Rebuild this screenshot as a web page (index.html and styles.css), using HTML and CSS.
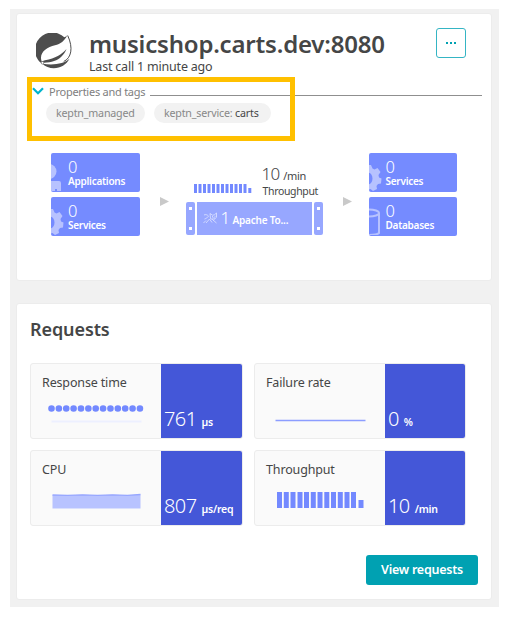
FILE: index.html
```
<!DOCTYPE html>
<html lang="en">
<head>
<meta charset="utf-8">
<title>musicshop.carts.dev:8080</title>
<link rel="stylesheet" href="styles.css">
</head>
<body>
<svg class="defs" width="0" height="0" aria-hidden="true">
  <symbol id="gear" viewBox="0 0 14 38">
    <path fill-rule="evenodd" d="M-4 12h6l1.500 3.500 2 1L8.500 15l3 4-2 3 .5 2.500 2.500 1-.5 5-3 .5-1.500 2 .5 3-4 2-2.500-2L-4 38zM-3 19.500v12h2a4.500 6 0 0 0 0-12z"/>
  </symbol>
</svg>
<main class="board">
  <section class="card service">
    <header class="head">
      <svg class="logo" viewBox="0 0 36 36">
        <path fill="#4d4d4d" d="M31.300 2.200C28.500 8 24.500 10.800 19 12.200 11.500 14 5.200 18 5 24.500c0 1.700.3 3.300 1.100 4.700l-1.800.3A17.400 17.400 0 0 1 28.300 4.300c1.300-.6 2.200-1.200 3-2.100z"/>
        <path fill="#4d4d4d" d="M8 29.800c7.500-.3 13.500-2.300 17.500-6.300 2.300-2.300 4-4.800 5-7.500-4.800 5.500-11 9.300-21.500 11.200l-3.500 1.300zM6.500 30.700c2.800 2.900 6.900 4.500 11.300 4.500 6.700 0 12.700-3.700 15.700-9.500-5.500 5-15.500 6.800-27 5z"/>
        <path fill="none" stroke="#4d4d4d" stroke-width="1" d="M31.700 2.500c5.800 12.500 3.600 22.500-4 26"/>
        <circle cx="6.500" cy="29.800" r="1.300" fill="#fff" stroke="#4d4d4d" stroke-width=".6"/>
      </svg>
      <div class="heading">
        <h1>musicshop.carts.dev:8080</h1>
        <p>Last call 1 minute ago</p>
      </div>
      <button class="more" aria-label="More"><i></i><i></i><i></i></button>
    </header>
    <div class="props">
      <svg class="chevron" viewBox="0 0 12 8"><path d="M1 1.200l5 5 5-5" fill="none" stroke="#00b4cc" stroke-width="2.200"/></svg>
      <span class="props-label">Properties and tags</span>
      <span class="rule"></span>
    </div>
    <div class="chips">
      <span class="chip first">keptn_managed</span>
      <span class="chip second">keptn_service: <b>carts</b></span>
    </div>
    <div class="highlight"></div>
    <div class="flow">
      <div class="stack">
        <div class="tile">
          <svg class="tile-icon" viewBox="0 0 14 38"><circle cx="-2" cy="18.500" r="7.500"/><path d="M0 28h8q2 0 2 2v8H6v-2H4v2H0z"/></svg>
          <span class="num">0</span><span class="cap">Applications</span>
        </div>
        <div class="tile">
          <svg class="tile-icon" viewBox="0 0 14 38"><use href="#gear" width="14" height="38"/></svg>
          <span class="num">0</span><span class="cap">Services</span>
        </div>
      </div>
      <svg class="arrow" viewBox="0 0 9 9"><path d="M0 0l9 4.500-9 4.500z"/></svg>
      <div class="center">
        <div class="rate">
          <svg class="minibars" viewBox="0 0 58 10">
            <path stroke="#7389ff" stroke-width="3" d="M1.500 1v9M6 1v9M10.500 1v9M15 1v9M19.500 1v9M24 1v9M28.500 1v9M33 1v9M37.500 1v9M42 1v9M46.500 1v9M51 1v9M55.800 5v5"/>
          </svg>
          <div class="rate-text">
            <span class="rate-value">10 <small>/min</small></span>
            <span class="rate-name">Throughput</span>
          </div>
        </div>
        <div class="server">
          <div class="ear"><i></i><i></i></div>
          <div class="server-body">
            <svg class="tomcat" viewBox="0 0 14 12" fill="none" stroke="#dfe4ff" stroke-width=".8"><path d="M.5 11l2.500-2.500M1 3C2.500 2.300 4 2.500 5.500 4M1.500 7c2-.5 3-2 4-2.500M3 11l3.500-4L9 10.500M7 1.500l2.500 1.700 2-.3 2-2.100v4.500L10.500 8 7.500 6.500zM9 4.500h1M11.500 4.300h1M9 6h3M10 8l3.500 3"/></svg>
            <span class="count">1</span><span class="tech">Apache To...</span>
          </div>
          <div class="ear"><i></i><i></i></div>
        </div>
      </div>
      <svg class="arrow" viewBox="0 0 9 9"><path d="M0 0l9 4.500-9 4.500z"/></svg>
      <div class="stack">
        <div class="tile">
          <svg class="tile-icon" viewBox="0 0 14 38"><use href="#gear" width="14" height="38"/></svg>
          <span class="num">0</span><span class="cap">Services</span>
        </div>
        <div class="tile">
          <svg class="tile-icon line" viewBox="0 0 14 38"><ellipse cx="0" cy="16" rx="10" ry="3.500"/><path d="M10 16v20q-2 2-10 2"/></svg>
          <span class="num">0</span><span class="cap">Databases</span>
        </div>
      </div>
    </div>
  </section>

  <section class="card requests">
    <h2>Requests</h2>
    <div class="metrics">
      <article class="metric">
        <div class="metric-info">
          <h3>Response time</h3>
          <svg class="chart" viewBox="0 0 130 40">
            <path d="M20.500 12.500h88.600" fill="none" stroke="#7389ff" stroke-width="6.600" stroke-linecap="round" stroke-dasharray="0 7.370"/>
            <path d="M20.500 25.500h90" stroke="#edf0ff" stroke-width="2"/>
          </svg>
        </div>
        <div class="metric-value"><strong>761</strong><span>µs</span></div>
      </article>
      <article class="metric">
        <div class="metric-info">
          <h3>Failure rate</h3>
          <svg class="chart" viewBox="0 0 130 40"><path d="M20.500 24.500h90" stroke="#8c9dff" stroke-width="1.500"/></svg>
        </div>
        <div class="metric-value"><strong>0</strong><span>%</span></div>
      </article>
      <article class="metric">
        <div class="metric-info">
          <h3>CPU</h3>
          <svg class="chart" viewBox="0 0 130 40">
            <path d="M21.500 12l15 .3 15-.5 15 .5 15-.5 15 .5 13-.8v14H21.500z" fill="#b8c3ff"/>
            <path d="M21.500 12l15 .3 15-.5 15 .5 15-.5 15 .5 13-.8" fill="none" stroke="#97a7ff" stroke-width="1.300"/>
          </svg>
        </div>
        <div class="metric-value"><strong>807</strong><span>µs/req</span></div>
      </article>
      <article class="metric">
        <div class="metric-info">
          <h3>Throughput</h3>
          <svg class="chart" viewBox="0 0 130 40">
            <path stroke="#7389ff" stroke-width="5" d="M24.500 9v16M31.300 9v16M38 9v16M45 9v16M51.500 9v16M58.300 9v16M65 9v16M71.800 9v16M78.500 9v16M85.300 9v16M92 9v16M98.500 9v16M106 17V25"/>
          </svg>
        </div>
        <div class="metric-value"><strong>10</strong><span>/min</span></div>
      </article>
    </div>
    <button class="view">View requests</button>
  </section>
</main>
</body>
</html>
```
FILE: styles.css
```
* { box-sizing: border-box; }
body {
  margin: 0;
  padding: 9px 11px 0 10px;
  background: #fff;
  color: #454646;
  font-family: "Noto Sans", "Open Sans", sans-serif;
}
h1, h2, h3, p { margin: 0; }
button { font-family: inherit; padding: 0; }
svg { display: block; flex: none; }
span { white-space: nowrap; }
.defs { position: absolute; }

.board {
  height: 598px;
  padding: 4px 7px 0 6px;
  background: #f1f1f1;
}
.card {
  position: relative;
  background: #fff;
  border: 1px solid #ececec;
  border-radius: 3px;
}
.service { height: 268px; padding: 14px 9px 0 15px; }
.requests { height: 297px; margin-top: 22px; padding: 13px 13px 0 13px; }

.head { display: flex; height: 55px; }
.logo { width: 36px; height: 36px; margin: 5px 0 0 4px; }
.heading { flex: 1; padding-left: 17px; white-space: nowrap; }
.heading h1 { font-size: 24px; line-height: 31px; font-weight: 600; letter-spacing: -0.2px; }
.heading p { font-size: 12.500px; line-height: 16px; letter-spacing: -0.200px; }
.more {
  width: 30px;
  height: 30px;
  margin-right: 16px;
  border: 1px solid #35b5c4;
  border-radius: 3px;
  background: #fff;
  display: flex;
  align-items: center;
  justify-content: center;
  gap: 2px;
}
.more i { width: 2px; height: 2px; background: #00a1b2; }

.props { display: flex; align-items: center; height: 16px; }
.chevron { width: 12px; height: 8px; }
.props-label { width: 106px; padding-left: 5px; font-size: 11px; letter-spacing: -0.250px; color: #808080; }
.rule { flex: 1; height: 1px; margin-top: 9px; background: #8f8f8f; }

.chips { display: flex; gap: 9px; margin: 4px 0 0 14px; }
.chip {
  height: 20px;
  line-height: 20px;
  padding: 0 10px;
  border-radius: 10px;
  background: #f2f2f2;
  color: #888;
  font-size: 10.700px;
  letter-spacing: -0.200px;
}
.chip b { font-weight: 400; color: #454646; }
.chip.first { width: 99px; }
.chip.second { width: 117px; }
.highlight {
  position: absolute;
  left: 10px;
  top: 63px;
  width: 268px;
  height: 64px;
  border: 5px solid #ffc000;
}

.flow { display: flex; margin: 30px 0 0 19px; }
.stack { display: flex; flex-direction: column; gap: 5.500px; width: 88.500px; }
.tile {
  position: relative;
  height: 38.500px;
  padding: 6px 0 0 17px;
  border-radius: 2px;
  background: #758bff;
  color: #fff;
  overflow: hidden;
}
.tile-icon { position: absolute; left: 0; top: 0; width: 14px; height: 38px; fill: #b7c2ff; }
.tile-icon.line { fill: none; stroke: #b7c2ff; stroke-width: 2; }
.num { display: block; font-size: 16.500px; line-height: 16px; font-weight: 300; }
.cap { display: block; font-size: 10px; line-height: 12px; font-weight: 600; letter-spacing: -0.250px; }
.arrow { width: 9px; height: 9px; margin: 44px 0 0 20px; fill: #c9c9c9; }
.center { width: 137px; margin-left: 17px; padding-top: 14px; }
.arrow + .stack { margin-left: 17px; }
.rate { display: flex; height: 35px; padding-left: 8px; }
.minibars { width: 58px; height: 10px; margin-top: 16px; }
.rate-text { padding-left: 10px; margin-top: -2px; }
.rate-value, .rate-name { display: block; }
.rate-value { font-size: 17px; line-height: 17px; font-weight: 300; letter-spacing: -0.700px; }
.rate-value small { font-size: 11px; font-weight: 400; letter-spacing: -0.300px; }
.rate-name { padding-left: 1px; font-size: 10.500px; line-height: 15px; letter-spacing: -0.350px; }
.server { display: flex; gap: 2px; height: 33px; }
.ear {
  width: 9px;
  padding: 5px 0;
  border-radius: 2px;
  background: #97a7ff;
  display: flex;
  flex-direction: column;
  align-items: center;
  justify-content: space-between;
}
.ear i { width: 3px; height: 3px; background: #fff; }
.server-body { flex: 1; display: flex; align-items: baseline; padding: 5px 0 0 6px; background: #97a7ff; color: #fff; }
.tomcat { width: 14px; height: 12px; }
.count { flex: none; width: 16px; padding-left: 4px; font-size: 17px; line-height: 22px; font-weight: 300; }
.tech { font-size: 10px; font-weight: 600; letter-spacing: -0.200px; }

.requests h2 { font-size: 18px; line-height: 24px; font-weight: 600; letter-spacing: -0.100px; }
.metrics {
  display: grid;
  grid-template-columns: 213px 212px;
  grid-auto-rows: 75.500px;
  gap: 11.500px 11px;
  margin-top: 22px;
}
.metric { display: flex; border: 1px solid #ececec; border-radius: 3px; background: #fafafa; overflow: hidden; }
.metric-info { flex: 1; }
.metric-info h3 { padding: 11px 0 0 11px; font-size: 12.500px; line-height: 16px; font-weight: 400; white-space: nowrap; letter-spacing: -0.150px; }
.chart { width: 130px; height: 40px; margin-top: 5px; }
.metric-value {
  width: 81px;
  padding: 42px 0 0 3px;
  background: #4457d8;
  color: #fff;
  line-height: 26px;
}
.metric-value strong { font-size: 20px; font-weight: 300; letter-spacing: -0.600px; }
.metric-value span { margin-left: 5px; font-size: 10.500px; font-weight: 600; letter-spacing: -0.200px; }
.view {
  display: block;
  width: 112px;
  height: 30px;
  margin: 29px 0 0 auto;
  border: 0;
  border-radius: 3px;
  background: #00a1b2;
  color: #fff;
  font-size: 12.500px;
  font-weight: 600;
  letter-spacing: -0.250px;
}
```
